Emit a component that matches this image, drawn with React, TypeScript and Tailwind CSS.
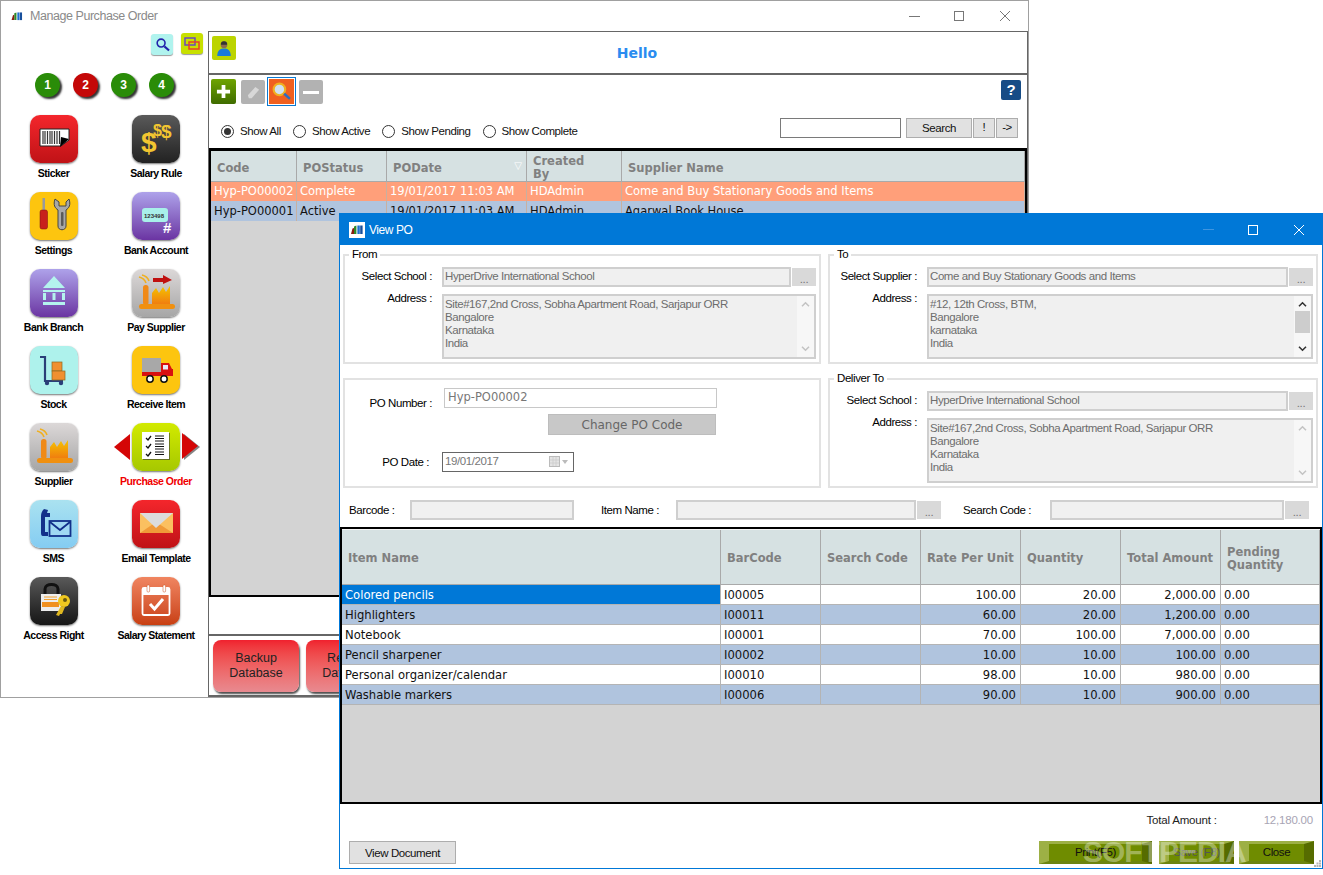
import type { ReactNode } from "react";

const verdana = "font-['DejaVu_Sans',sans-serif]";

const Logo = ({ className = "" }: { className?: string }) => (
  <svg viewBox="0 0 12 10" className={className}>
    <path d="M0 9 L1.5 3.5 L3 3 L3 9 Z" fill="#8a1c10" />
    <path d="M3 9 L3 1.5 L5.4 0.5 L5.4 9 Z" fill="#2f8a2a" />
    <rect x="6.4" y="0.5" width="2.4" height="8.5" fill="#1f6fd0" />
    <rect x="9.2" y="0.5" width="2.4" height="8.5" fill="#174f9c" />
  </svg>
);

const Tile = ({ bg, children }: { bg: string; children: ReactNode }) => (
  <div className={`h-[48px] w-[48px] overflow-hidden rounded-[10px] shadow-[0_1px_2px_rgba(0,0,0,0.55)] ${bg}`}>
    <svg viewBox="0 0 48 48" className="h-full w-full">
      {children}
    </svg>
  </div>
);

const Factory = ({ arrow = false }: { arrow?: boolean }) => (
  <>
    <defs>
      <linearGradient id="flame" x1="0" y1="0" x2="0" y2="1">
        <stop offset="0" stopColor="#f5c400" />
        <stop offset="1" stopColor="#f07a10" />
      </linearGradient>
    </defs>
    <path d="M7 8 C11 9 13 11 14 14 M10 6 C14 7 16 9 17 12" stroke="#f0b020" strokeWidth="1.6" fill="none" />
    <rect x="11" y="16" width="5.5" height="20" rx="2.5" fill="#f08a18" />
    <path d="M20 36 V24 L24 19 L27 24 L31 18 L34 23 L38 17 V36 Z" fill="url(#flame)" />
    <rect x="7" y="35" width="36" height="5" rx="2.5" fill="#f09010" />
    {arrow && <path d="M21 9 H31 V6 L40 11 L31 15 V13 H21 Z" fill="#c01010" />}
  </>
);

const tiles: { label: string; bg: string; art: ReactNode }[] = [
  {
    label: "Sticker",
    bg: "bg-linear-to-b from-[#f4262c] to-[#c01216]",
    art: (
      <>
        <path d="M10 14 H39 V25 L31 31 H10 Z" fill="#fff" stroke="#222" strokeWidth="1" />
        <path d="M13 16 V29 M15 16 V29 M17.5 16 V29 M20 16 V29 M22 16 V29 M24.5 16 V29 M27 16 V29 M29.5 16 V29" stroke="#333" strokeWidth="1.2" />
        <path d="M30 32 L39 24 L31 22 Z" fill="#000" />
      </>
    ),
  },
  {
    label: "Salary Rule",
    bg: "bg-linear-to-b from-[#5a5a5a] to-[#222222]",
    art: (
      <g fill="#f2c530" fontFamily="Liberation Sans" fontWeight="700">
        <text x="9" y="37" fontSize="28">$</text>
        <text x="21" y="21" fontSize="16">$</text>
        <text x="29" y="23" fontSize="19">$</text>
      </g>
    ),
  },
  {
    label: "Settings",
    bg: "bg-[#fdc50f]",
    art: (
      <>
        <rect x="12.5" y="6" width="2.5" height="12" fill="#9a9a9a" />
        <rect x="10" y="18" width="7.5" height="19" rx="2" fill="#c8201c" stroke="#7a1010" strokeWidth="0.5" />
        <path d="M25 7 C23 13 25 16 28 18 V34 C28 39 36 39 36 34 V18 C39 16 41 13 39 7 L36 10 V14 H29 V10 Z" fill="#a8a8a8" stroke="#444" strokeWidth="1" />
        <rect x="31" y="20" width="2.5" height="14" rx="1" fill="#5a5a5a" />
      </>
    ),
  },
  {
    label: "Bank Account",
    bg: "bg-linear-to-b from-[#aea2ea] to-[#6b34a2]",
    art: (
      <>
        <rect x="10" y="16" width="26" height="14" rx="3" fill="#a8f0ea" />
        <text x="12" y="25.5" fontSize="6" fontWeight="700" fill="#333" fontFamily="Liberation Sans">123498</text>
        <text x="31" y="41" fontSize="15" fontWeight="700" fill="#fff" fontFamily="Liberation Sans">#</text>
      </>
    ),
  },
  {
    label: "Bank Branch",
    bg: "bg-linear-to-b from-[#aea2ea] to-[#6b34a2]",
    art: (
      <g fill="#b4f4ee">
        <path d="M24 7 L35 19 H13 Z" />
        <rect x="13" y="21" width="22" height="2" />
        <rect x="13" y="24" width="3" height="7" />
        <rect x="22.5" y="24" width="3" height="7" />
        <rect x="32" y="24" width="3" height="7" />
        <rect x="13" y="33" width="22" height="3" />
      </g>
    ),
  },
  {
    label: "Pay Supplier",
    bg: "bg-linear-to-b from-[#dcd8d8] to-[#a6a6a6]",
    art: <Factory arrow />,
  },
  {
    label: "Stock",
    bg: "bg-[#aef2ec]",
    art: (
      <>
        <path d="M10 11 H15 V35 H33" stroke="#2a3f78" strokeWidth="2.2" fill="none" />
        <circle cx="17" cy="37" r="2.2" fill="#2a3f78" />
        <circle cx="31" cy="37" r="2.2" fill="#2a3f78" />
        <rect x="22" y="16" width="10" height="9" fill="#f09030" stroke="#8a6a20" strokeWidth="0.7" />
        <rect x="22" y="25" width="13" height="9" fill="#f09030" stroke="#8a6a20" strokeWidth="0.7" />
      </>
    ),
  },
  {
    label: "Receive Item",
    bg: "bg-[#fdc50f]",
    art: (
      <>
        <rect x="10" y="12" width="19" height="14" fill="#a8a8a8" />
        <path d="M10 26 H29 V17 H37 L40 23 H41 V30 H10 Z" fill="#d81010" />
        <rect x="31" y="19" width="5" height="4.5" fill="#e8e8f8" />
        <circle cx="18" cy="33" r="3.2" fill="#fff" stroke="#111" strokeWidth="1.5" />
        <circle cx="32" cy="33" r="3.2" fill="#fff" stroke="#111" strokeWidth="1.5" />
      </>
    ),
  },
  {
    label: "Supplier",
    bg: "bg-linear-to-b from-[#dcd8d8] to-[#a6a6a6]",
    art: <Factory />,
  },
  {
    label: "Purchase Order",
    bg: "bg-linear-to-b from-[#d2ea00] to-[#a6c800]",
    art: (
      <>
        <rect x="11" y="10" width="27" height="27" fill="#333" opacity="0.6" />
        <rect x="10" y="9" width="27" height="27" fill="#fff" />
        <path d="M14 15 L16 17 L19 13 M14 23 L16 25 L19 21 M14 31 L16 33 L19 29" stroke="#111" strokeWidth="1.3" fill="none" />
        <path d="M23 13 H32 M23 15.5 H32 M23 18 H32 M23 21 H32 M23 23.5 H32 M23 26 H32 M23 29 H32 M23 31.5 H32" stroke="#111" strokeWidth="1" />
      </>
    ),
  },
  {
    label: "SMS",
    bg: "bg-linear-to-b from-[#aae2f0] to-[#84ccf2]",
    art: (
      <>
        <path d="M14 9 L18 10 L17 13 H20 V17 H15 V32 H18 V36 H13 C11 36 11 34 11 32 V16 C11 13 12 11 14 9 Z" fill="#12308a" />
        <rect x="19.5" y="21" width="21" height="15" fill="#a0d8f2" stroke="#12308a" strokeWidth="1.8" />
        <path d="M20 22 L30 30 L40 22" stroke="#12308a" strokeWidth="1.8" fill="none" />
      </>
    ),
  },
  {
    label: "Email Template",
    bg: "bg-linear-to-b from-[#f4262c] to-[#c01216]",
    art: (
      <>
        <rect x="8" y="13" width="33" height="20" fill="#fbc060" />
        <path d="M8 33 L24 22 L41 33 Z" fill="#f09a38" />
        <path d="M8 13 H41 L24 28 Z" fill="#dcdcdc" />
      </>
    ),
  },
  {
    label: "Access Right",
    bg: "bg-linear-to-b from-[#5a5a5a] to-[#161616]",
    art: (
      <>
        <path d="M15 17 V12 C15 6 28 6 28 12 V17" stroke="#111" strokeWidth="3" fill="none" />
        <rect x="11" y="17" width="20" height="17" fill="#ededed" />
        <rect x="12" y="25" width="17" height="5" fill="#f09020" />
        <path d="M14 20 H27 M14 22.5 H27" stroke="#f0a030" strokeWidth="1" />
        <circle cx="34" cy="24" r="6" fill="#f0c820" />
        <circle cx="35" cy="23" r="2" fill="#6a5a10" />
        <path d="M31 29 L26 38 L29 39 L30 37 L32 37 L35 30 Z" fill="#e0b820" />
      </>
    ),
  },
  {
    label: "Salary Statement",
    bg: "bg-linear-to-b from-[#f08560] to-[#c83f10]",
    art: (
      <>
        <rect x="10.5" y="11" width="27" height="27" rx="1.5" fill="none" stroke="#fff" strokeWidth="1.8" />
        <rect x="10.5" y="11" width="27" height="7" fill="#fff" />
        <rect x="15" y="8" width="2.6" height="7" rx="1" fill="#fff" stroke="#c85020" strokeWidth="0.5" />
        <rect x="31" y="8" width="2.6" height="7" rx="1" fill="#fff" stroke="#c85020" strokeWidth="0.5" />
        <path d="M18 27 L22.5 32 L31 22" stroke="#fff" strokeWidth="3" fill="none" />
      </>
    ),
  },
];

const Sidebar = () => (
  <div className="flex w-[207px] shrink-0 flex-col">
    <div className="flex h-[21px] items-start justify-end gap-[8px] pr-[5px]">
      <div className="mt-[3px] flex h-[21px] w-[22px] items-center justify-center rounded-[3px] bg-[#b0f3ee] shadow-[0_1px_1px_rgba(0,0,0,0.4)]">
        <svg viewBox="0 0 16 16" className="h-[15px] w-[15px]">
          <circle cx="6.5" cy="6.5" r="4.2" fill="none" stroke="#2222aa" strokeWidth="1.7" />
          <path d="M10 10 L15 14.5" stroke="#2222aa" strokeWidth="2.2" />
        </svg>
      </div>
      <div className="mt-[2px] flex h-[21px] w-[22px] items-center justify-center rounded-[3px] bg-[#c8e000] shadow-[0_1px_1px_rgba(0,0,0,0.4)]">
        <svg viewBox="0 0 16 16" className="h-[16px] w-[16px]">
          <rect x="1" y="2" width="10" height="7" fill="none" stroke="#6a4ac0" strokeWidth="1.5" />
          <rect x="5" y="6" width="10" height="7" fill="none" stroke="#e8402a" strokeWidth="1.5" />
        </svg>
      </div>
    </div>
    <div className="mt-[21px] flex gap-[13px] pl-[34px]">
      {["1", "2", "3", "4"].map((n) => (
        <div
          key={n}
          className={`flex h-[24px] w-[25px] items-center justify-center rounded-full text-[12px] font-bold text-white shadow-[2px_2px_2px_rgba(0,0,0,0.8)] ${n === "2" ? "bg-[#c40808]" : "bg-[#2a8c08]"}`}
        >
          {n}
        </div>
      ))}
    </div>
    <div className="mt-[18px] grid grid-cols-[103px_102px] pl-[1px]">
      {tiles.map((t) => {
        const active = t.label === "Purchase Order";
        return (
          <div key={t.label} className="relative flex h-[77px] flex-col items-center">
            <Tile bg={t.bg}>{t.art}</Tile>
            <div className={`mt-[4px] text-[10.5px] leading-[13px] font-bold tracking-[-0.5px] whitespace-nowrap ${active ? "text-[#f00000]" : "text-black"}`}>
              {t.label}
            </div>
            {active && (
              <>
                <svg viewBox="0 0 18 30" className="absolute top-[9px] left-[8px] h-[30px] w-[18px]">
                  <path d="M1 15 L17 2 V28 Z" fill="#d40606" />
                </svg>
                <svg viewBox="0 0 18 30" className="absolute top-[9px] left-[77px] h-[30px] w-[18px]">
                  <path d="M2 2 L18 15 L2 28 Z" fill="#333" opacity="0.6" />
                  <path d="M0 1 L16 14 L0 27 Z" fill="#d40606" />
                </svg>
              </>
            )}
          </div>
        );
      })}
    </div>
  </div>
);

const ToolButton = ({ className = "", children }: { className?: string; children: ReactNode }) => (
  <div className={`flex h-[24px] w-[24px] items-center justify-center rounded-[2px] ${className}`}>{children}</div>
);

const Radio = ({ label, checked = false, className = "" }: { label: string; checked?: boolean; className?: string }) => (
  <div className={`flex items-center gap-[6px] ${className}`}>
    <span className="flex h-[13px] w-[13px] items-center justify-center rounded-full border border-[#333]">
      {checked && <span className="h-[7px] w-[7px] rounded-full bg-[#333]" />}
    </span>
    <span>{label}</span>
  </div>
);

const poRows = [
  ["Hyp-PO00002", "Complete", "19/01/2017 11:03 AM", "HDAdmin", "Come and Buy Stationary Goods and Items"],
  ["Hyp-PO00001", "Active", "19/01/2017 11:03 AM", "HDAdmin", "Agarwal Book House"],
];

const MainPanel = () => (
  <div className="flex flex-1 flex-col border-x border-b-2 border-[#666]">
    <div className="relative flex h-[44px] items-center justify-center border-y border-b-2 border-[#666] pt-[2px] pl-[38px]">
      <div className="absolute top-[4px] left-[3px] flex h-[24px] w-[24px] items-center justify-center rounded-[2px] bg-[#bcd400]">
        <svg viewBox="0 0 16 16" className="h-[18px] w-[18px]">
          <circle cx="8" cy="5" r="3" fill="#8a6a50" />
          <path d="M8 2 C5 2 5 5 5.5 5 H10.5 C11 5 11 2 8 2 Z" fill="#333" />
          <path d="M2 15 C2 10 5 8.5 8 8.5 C11 8.5 14 10 14 15 Z" fill="#1a7ad8" />
        </svg>
      </div>
      <span className={`${verdana} text-[14px] font-bold text-[#2a8cf0]`}>Hello</span>
    </div>
    <div className="flex h-[73px] flex-col pt-[4px] pr-[9px] pl-[2px]">
      <div className="flex h-[26px] items-start">
        <ToolButton className="h-[25px] w-[25px] bg-linear-to-b from-[#6fa400] to-[#3f6c00]">
          <svg viewBox="0 0 16 16" className="h-[15px] w-[15px]">
            <path d="M6 1 H10 V6 H15 V10 H10 V15 H6 V10 H1 V6 H6 Z" fill="#fff" />
          </svg>
        </ToolButton>
        <ToolButton className="mt-[1px] ml-[5px] bg-[#b2b2b2]">
          <svg viewBox="0 0 16 16" className="h-[15px] w-[15px]">
            <path d="M2 11 L10 2 L14 5 L6 14 L3 14 Z" fill="#d8d8d8" />
          </svg>
        </ToolButton>
        <div className="-mt-[2px] ml-[2px] flex h-[29px] w-[29px] items-center justify-center border border-[#0a78d0] bg-white p-[1px]">
          <div className="flex h-full w-full items-center justify-center bg-[#f0601f]">
            <svg viewBox="0 0 20 20" className="h-[21px] w-[21px]">
              <circle cx="8" cy="8" r="5.5" fill="#cfe0f0" stroke="#f0b020" strokeWidth="2" />
              <path d="M12.5 12 L18 17" stroke="#2a6fc0" strokeWidth="2.4" />
            </svg>
          </div>
        </div>
        <ToolButton className="mt-[1px] ml-[3px] bg-[#b2b2b2]">
          <div className="h-[3px] w-[16px] bg-white" />
        </ToolButton>
        <div className="mt-[1px] -mr-[3px] ml-auto flex h-[20px] w-[20px] items-center justify-center rounded-[2px] bg-[#174c86] text-[15px] font-bold text-white">
          ?
        </div>
      </div>
      <div className="mt-[13px] flex items-start text-[11.5px] tracking-[-0.4px] text-[#111]">
        <Radio checked label="Show All" className="mt-[5px] ml-[10px]" />
        <Radio label="Show Active" className="mt-[5px] ml-[12px]" />
        <Radio label="Show Pending" className="mt-[5px] ml-[12px]" />
        <Radio label="Show Complete" className="mt-[5px] ml-[12px]" />
        <div className="ml-auto flex">
          <div className="h-[20px] w-[121px] border border-[#7a7a7a] bg-white" />
          <div className="ml-[5px] flex h-[20px] w-[66px] items-center justify-center border border-[#adadad] bg-[#e1e1e1] pt-[1px]">Search</div>
          <div className="ml-[1px] flex h-[20px] w-[22px] items-center justify-center border border-[#adadad] bg-[#e1e1e1]">!</div>
          <div className="ml-[1px] flex h-[20px] w-[22px] items-center justify-center border border-[#adadad] bg-[#e1e1e1]">-&gt;</div>
        </div>
      </div>
    </div>
    <div className={`${verdana} flex h-[449px] flex-col border-2 border-t-[3px] border-black bg-[#d3d3d3] text-[11.5px]`}>
      <div className="grid h-[30px] grid-cols-[86px_90px_140px_95px_1fr] bg-[#d6e1e2] text-[11.5px] leading-[13px] font-bold text-[#808080]">
        {["Code", "POStatus", "PODate", "Created By", "Supplier Name"].map((h) => (
          <div key={h} className="relative flex items-center border-r border-b border-[#a9a9a9] px-[6px] pt-[4px]">
            {h === "Created By" ? <span>Created<br />By</span> : h}
            {h === "PODate" && <span className="absolute top-[8px] right-[4px] text-[10px] font-normal text-white">▽</span>}
          </div>
        ))}
      </div>
      {poRows.map((row, i) => (
        <div key={row[0]} className={`grid h-[20px] grid-cols-[86px_90px_140px_95px_1fr] ${i === 0 ? "bg-[#ff9f7a] text-white" : "bg-[#b0c4de] text-[#111]"}`}>
          {row.map((c) => (
            <div key={c} className="flex items-center border-r border-[#c8b0a0] px-[3px] pt-[1px] whitespace-nowrap">{c}</div>
          ))}
        </div>
      ))}
    </div>
    <div className="h-[37px]" />
    <div className="flex flex-1 gap-[7px] border-t-2 border-[#666] pt-[4px] pl-[4px]">
      {[["Backup", "Database"], ["Restore", "Database"]].map(([a, b]) => (
        <div key={a} className="flex h-[52px] w-[86px] flex-col items-center justify-center rounded-[8px] bg-linear-to-b from-[#f0202e] to-[#e88a90] text-[12.5px] leading-[15px] text-[#222] shadow-[1px_2px_2px_rgba(0,0,0,0.7)]">
          <span>{a}</span>
          <span>{b}</span>
        </div>
      ))}
    </div>
  </div>
);

const Group = ({ title, className = "", children }: { title?: string; className?: string; children: ReactNode }) => (
  <div className={`relative h-[110px] border-2 border-[#e2e2e2] ${className}`}>
    {title && <div className="absolute -top-[9px] left-[4px] bg-white px-[3px] text-[11.5px] leading-[14px] text-black">{title}</div>}
    {children}
  </div>
);

const Field = ({ className = "", children }: { className?: string; children?: ReactNode }) => (
  <div className={`flex h-[20px] items-center border-2 border-[#cfcfcf] bg-[#f0f0f0] pl-[1px] whitespace-nowrap text-[#6d6d6d] ${className}`}>{children}</div>
);

const Dots = ({ className = "" }: { className?: string }) => (
  <div className={`flex h-[18px] w-[24px] shrink-0 items-end justify-center bg-[#d9d9d9] leading-[14px] text-[#777] ${className}`}>...</div>
);

const Chevron = ({ up = false, active = false }: { up?: boolean; active?: boolean }) => (
  <svg viewBox="0 0 10 8" className="h-[7px] w-[9px]">
    <path d={up ? "M1 6 L5 2 L9 6" : "M1 2 L5 6 L9 2"} fill="none" stroke={active ? "#333" : "#c4c4c4"} strokeWidth="1.8" />
  </svg>
);

const AddressBox = ({ lines, active = false, className = "" }: { lines: string[]; active?: boolean; className?: string }) => (
  <div className={`flex h-[65px] border-2 border-[#cfcfcf] bg-[#f0f0f0] text-[#6d6d6d] ${className}`}>
    <div className="flex-1 pt-[2px] pl-[1px] leading-[13px] whitespace-nowrap">
      {lines.map((l) => (
        <div key={l}>{l}</div>
      ))}
    </div>
    <div className="flex w-[17px] flex-col items-center bg-[#f7f7f7] py-[5px]">
      <Chevron up active={active} />
      {active && <div className="mt-[3px] h-[22px] w-[15px] bg-[#cdcdcd]" />}
      <div className="mt-auto">
        <Chevron active={active} />
      </div>
    </div>
  </div>
);

const AddressGroup = ({
  title,
  label,
  value,
  lines,
  active,
  fieldW,
  boxW,
}: {
  title: string;
  label: string;
  value: string;
  lines: string[];
  active?: boolean;
  fieldW: string;
  boxW: string;
}) => (
  <Group title={title}>
    <div className="flex items-center pt-[11px]">
      <div className="w-[87px] text-right text-black">{label}</div>
      <Field className={`ml-[10px] ${fieldW}`}>{value}</Field>
      <Dots className="ml-[1px]" />
    </div>
    <div className="flex items-start pt-[7px]">
      <div className="-mt-[4px] w-[87px] text-right text-black">Address :</div>
      <AddressBox lines={lines} active={active} className={`ml-[10px] ${boxW}`} />
    </div>
  </Group>
);

const school = ["Site#167,2nd Cross, Sobha Apartment Road, Sarjapur ORR", "Bangalore", "Karnataka", "India"];

const items = [
  ["Colored pencils", "I00005", "", "100.00", "20.00", "2,000.00", "0.00"],
  ["Highlighters", "I00011", "", "60.00", "20.00", "1,200.00", "0.00"],
  ["Notebook", "I00001", "", "70.00", "100.00", "7,000.00", "0.00"],
  ["Pencil sharpener", "I00002", "", "10.00", "10.00", "100.00", "0.00"],
  ["Personal organizer/calendar", "I00010", "", "98.00", "10.00", "980.00", "0.00"],
  ["Washable markers", "I00006", "", "90.00", "10.00", "900.00", "0.00"],
];

const itemHead = ["Item Name", "BarCode", "Search Code", "Rate Per Unit", "Quantity", "Total Amount", "Pending Quantity"];

const ItemsTable = () => (
  <div className={`${verdana} flex h-[277px] flex-col border-2 border-black bg-[#d3d3d3] text-[11.6px] tracking-normal`}>
    <div className="grid h-[56px] shrink-0 grid-cols-[379px_100px_100px_100px_100px_100px_1fr] border-t border-[#f4f4f4] bg-[#d6e1e2] text-[11.5px] leading-[13px] font-bold text-[#808080]">
      {itemHead.map((h) => (
        <div key={h} className="flex items-center border-r border-b border-[#a9a9a9] px-[6px] pt-[3px]">{h}</div>
      ))}
    </div>
    {items.map((row, i) => (
      <div key={row[0]} className={`grid h-[20px] grid-cols-[379px_100px_100px_100px_100px_100px_1fr] ${i % 2 ? "bg-[#b0c4de]" : "bg-white"}`}>
        {row.map((c, j) => {
          const numeric = j >= 3 && j <= 5;
          const selected = i === 0 && j === 0;
          return (
            <div
              key={j}
              className={`flex items-center border-r border-b border-[#b4b4b4] px-[3px] pt-[2px] whitespace-nowrap text-[#111] ${numeric ? "justify-end pr-[4px]" : ""} ${selected ? "bg-[#0078d7] text-white" : ""}`}
            >
              {c}
            </div>
          );
        })}
      </div>
    ))}
  </div>
);

const OliveButton = ({ children, className = "", muted = false }: { children: ReactNode; className?: string; muted?: boolean }) => (
  <div
    className={`flex h-[23px] items-center justify-center border-y-[3px] border-x-[10px] border-t-[#9db045] border-r-[#566c00] border-b-[#6c8410] border-l-[#9db045] bg-[#6f8c00] pt-[1px] ${muted ? "text-[#555]" : "text-[#111]"} ${className}`}
  >
    {children}
  </div>
);

const ViewPO = () => (
  <div className="absolute top-[213px] left-[339px] flex h-[656px] w-[984px] flex-col border border-[#0078d7] bg-white text-[11.5px] tracking-[-0.42px]">
    <div className="flex h-[31px] shrink-0 items-center bg-[#0078d7] pl-[9px] text-white">
      <div className="flex h-[16px] w-[16px] items-center justify-center bg-white">
        <Logo className="h-[10px] w-[12px]" />
      </div>
      <span className="ml-[4px] text-[12px]">View PO</span>
      <div className="ml-auto flex items-center pr-[18px]">
        <div className="h-px w-[11px] bg-[#3f95e0]" />
        <div className="ml-[34px] h-[10px] w-[10px] border border-white" />
        <svg viewBox="0 0 10 10" className="ml-[36px] h-[10px] w-[10px]">
          <path d="M0 0 L10 10 M10 0 L0 10" stroke="#fff" strokeWidth="1" />
        </svg>
      </div>
    </div>
    <div className="mt-[9px] ml-[3px] grid w-[975px] grid-cols-[478px_490px] gap-x-[7px] gap-y-[14px]">
      <AddressGroup title="From" label="Select School :" value="HyperDrive International School" lines={school} fieldW="w-[349px]" boxW="w-[374px]" />
      <AddressGroup title="To" label="Select Supplier :" value="Come and Buy Stationary Goods and Items" lines={["#12, 12th Cross, BTM,", "Bangalore", "karnataka", "India"]} active fieldW="w-[361px]" boxW="w-[386px]" />
      <Group>
        <div className="flex h-[28px] items-start pt-[8px]">
          <div className="mt-[7px] w-[87px] text-right text-black">PO Number :</div>
          <div className={`${verdana} ml-[12px] flex h-[20px] w-[273px] items-center border border-[#c8c8c8] pl-[3px] text-[11.5px] tracking-normal text-[#777]`}>Hyp-PO00002</div>
        </div>
        <div className={`${verdana} mt-[6px] ml-[203px] flex h-[21px] w-[168px] items-center justify-center border border-[#bdbdbd] bg-[#c8c8c8] pt-[1px] text-[12px] tracking-normal text-[#666]`}>Change PO Code</div>
        <div className="mt-[17px] flex h-[20px] items-center">
          <div className="mt-[2px] w-[84px] text-right text-black">PO Date :</div>
          <div className="ml-[13px] flex h-[20px] w-[132px] items-center border border-[#666] pl-[2px] text-[#777]">
            19/01/2017
            <svg viewBox="0 0 20 12" className="mr-[4px] ml-auto h-[12px] w-[20px]">
              <rect x="0.5" y="0.5" width="10" height="10" fill="#e4e4e4" stroke="#bbb" />
              <path d="M1 4 H10 M1 7 H10 M4 1 V10 M7 1 V10" stroke="#c8c8c8" strokeWidth="0.7" />
              <path d="M13 4 H19 L16 8 Z" fill="#bbb" />
            </svg>
          </div>
        </div>
      </Group>
      <AddressGroup title="Deliver To" label="Select School :" value="HyperDrive International School" lines={school} fieldW="w-[361px]" boxW="w-[386px]" />
    </div>
    <div className="mt-[12px] flex items-center">
      <span className="ml-[9px] w-[61px] pt-[1px] text-black">Barcode :</span>
      <Field className="w-[164px]" />
      <span className="ml-[27px] w-[75px] pt-[1px] text-black">Item Name :</span>
      <Field className="w-[240px]" />
      <Dots className="ml-[1px]" />
      <span className="ml-[22px] w-[87px] pt-[1px] text-black">Search Code :</span>
      <Field className="w-[234px]" />
      <Dots className="ml-[1px]" />
    </div>
    <div className="mt-[7px]">
      <ItemsTable />
    </div>
    <div className="flex h-[37px] justify-end pt-[8px] pr-[9px] tracking-[-0.2px] text-[#222]">
      <span>Total Amount :</span>
      <span className="ml-[47px] text-[#a8a4b4]">12,180.00</span>
    </div>
    <div className="relative flex pr-[8px] pl-[9px]">
      <div className="flex h-[23px] w-[107px] items-center justify-center border border-[#adadad] bg-[#e1e1e1] pt-[2px] text-[#111]">View Document</div>
      <OliveButton className="ml-auto w-[113px]">Print(F5)</OliveButton>
      <OliveButton muted className="ml-[7px] w-[75px]">Save (F8)</OliveButton>
      <OliveButton className="ml-[5px] w-[75px]">Close</OliveButton>
      <div className="absolute -top-[6px] left-[743px] text-[30px] leading-[34px] font-bold tracking-[-1px] whitespace-nowrap text-white/35">SOFTPEDIA</div>
      <svg viewBox="0 0 7 7" className="absolute top-[19px] right-[1px] h-[7px] w-[7px]">
        <path d="M5 0 H7 V2 H5 Z M2.5 2.5 H4.5 V4.5 H2.5 Z M5 2.5 H7 V4.5 H5 Z M0 5 H2 V7 H0 Z M2.5 5 H4.5 V7 H2.5 Z M5 5 H7 V7 H5 Z" fill="#b5b5b5" />
      </svg>
    </div>
  </div>
);

export default function App() {
  return (
    <div className="relative h-[875px] w-[1323px] overflow-hidden bg-white font-['Liberation_Sans',sans-serif]">
      <div className="absolute top-0 left-0 flex h-[698px] w-[1029px] flex-col border border-[#a0a0a0] bg-white">
        <div className="flex h-[30px] shrink-0 items-center pl-[10px]">
          <Logo className="h-[9px] w-[12px]" />
          <span className="ml-[7px] text-[12.5px] tracking-[-0.45px] text-[#8a8a8a]">Manage Purchase Order</span>
          <div className="ml-auto flex items-center pr-[18px]">
            <div className="h-px w-[11px] bg-[#777]" />
            <div className="ml-[34px] h-[10px] w-[10px] border border-[#777]" />
            <svg viewBox="0 0 10 10" className="ml-[36px] h-[10px] w-[10px]">
              <path d="M0 0 L10 10 M10 0 L0 10" stroke="#777" strokeWidth="1" />
            </svg>
          </div>
        </div>
        <div className="flex flex-1">
          <Sidebar />
          <MainPanel />
        </div>
      </div>
      <ViewPO />
    </div>
  );
}
